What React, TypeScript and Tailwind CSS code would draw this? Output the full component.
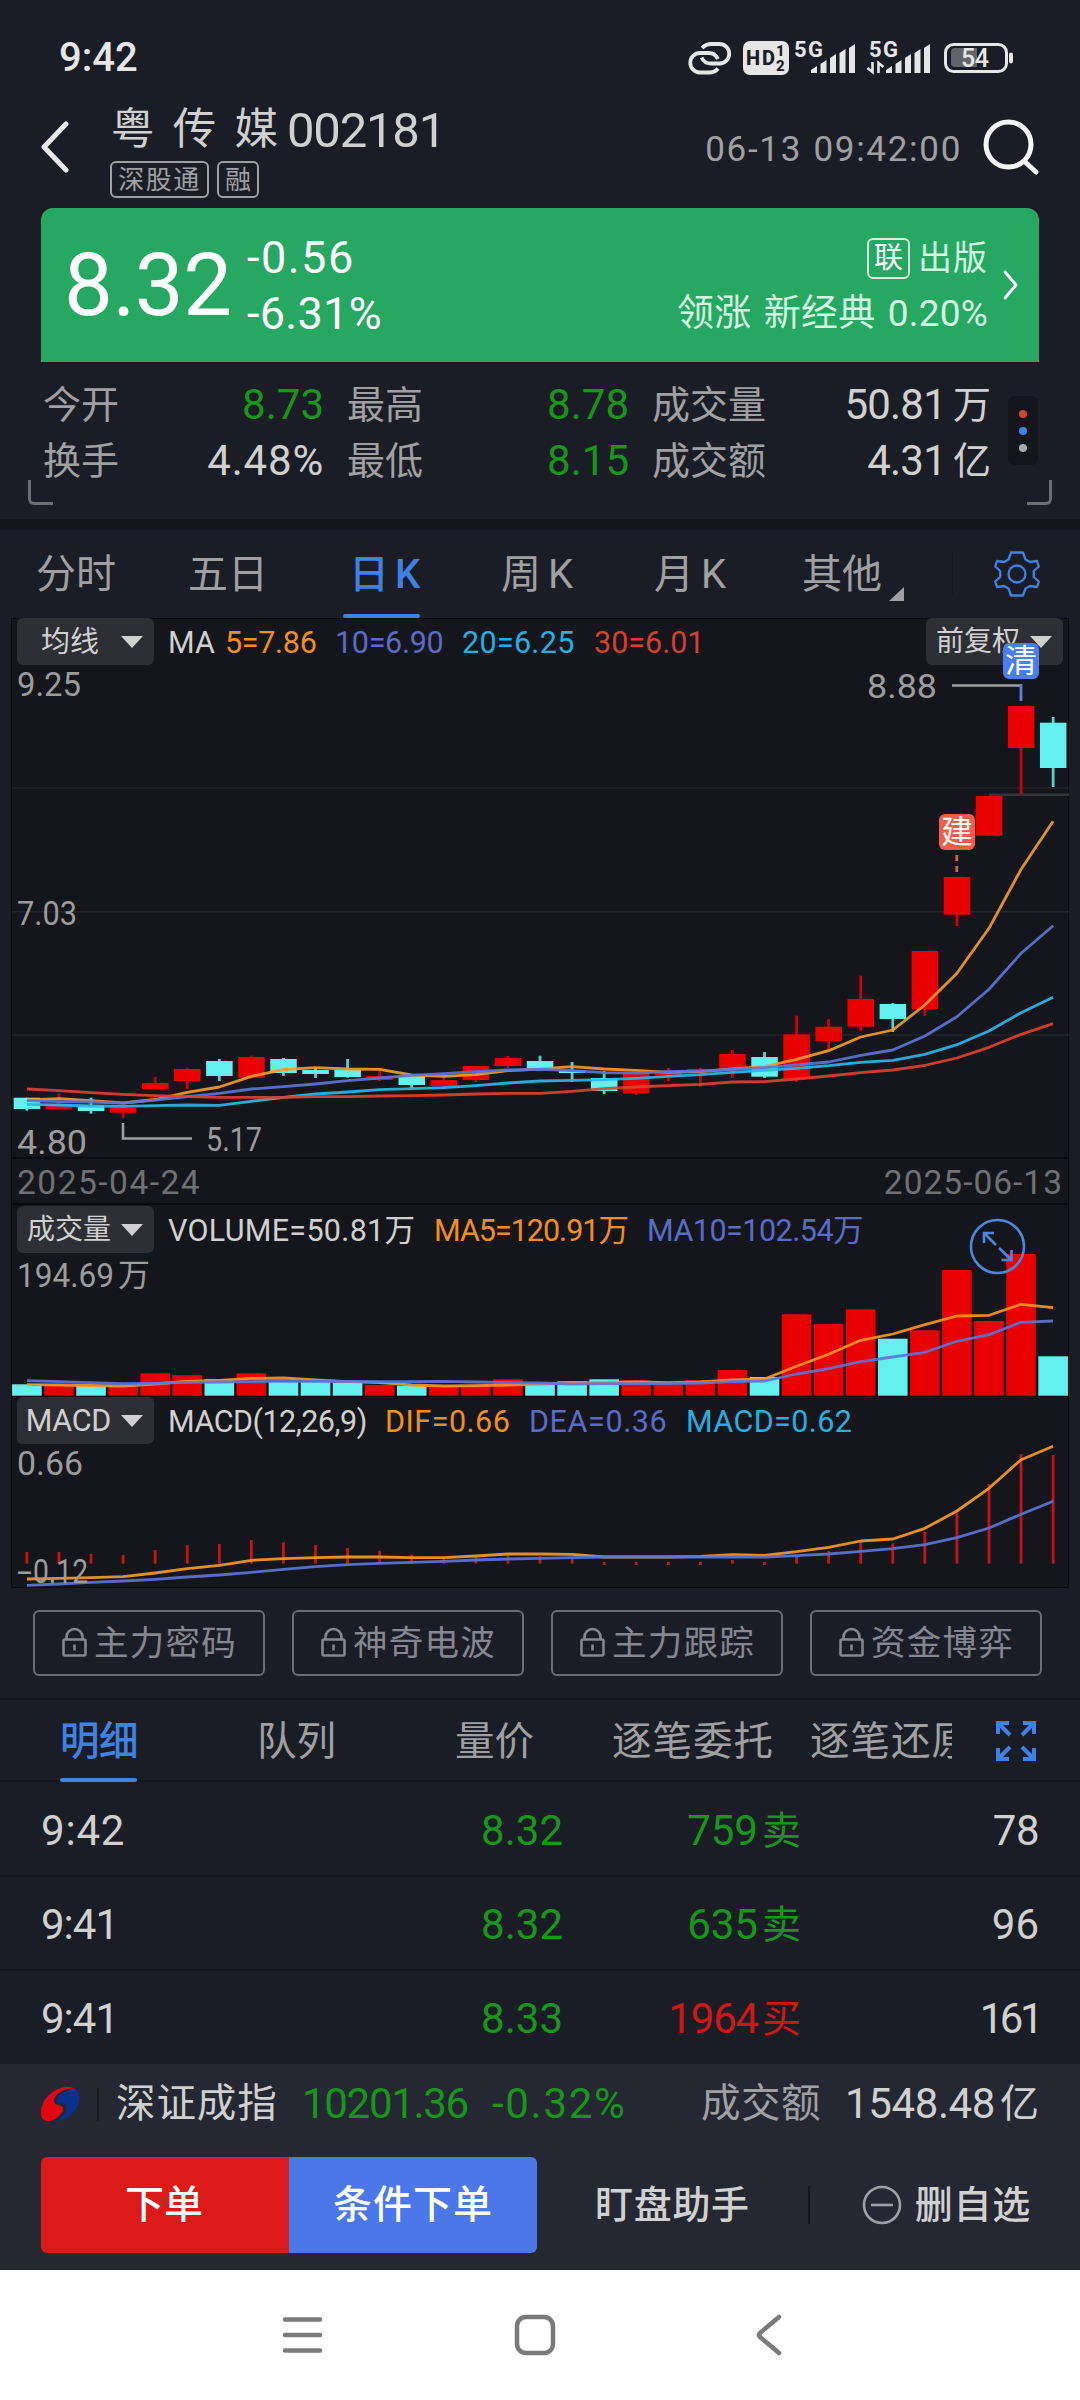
import { type ReactNode } from 'react';
import clsx from 'clsx';

const RED = '#e90000';
const CYAN = '#63f0ef';

const STEP = 32.07;
const cx = (i: number) => 26.9 + i * STEP;

// [up, high, bodyTop, bodyBottom, low]
const candles: [number, number, number, number, number][] = [
  [0, 1097.7, 1097.7, 1109, 1110.7],
  [1, 1093.3, 1104, 1109.3, 1109.3],
  [0, 1097.7, 1105, 1111, 1113.7],
  [1, 1107.7, 1107.7, 1112.7, 1117.7],
  [1, 1077, 1083, 1089, 1089],
  [1, 1067.7, 1069, 1081, 1089],
  [0, 1059, 1061, 1076, 1081],
  [1, 1055.7, 1057, 1077.7, 1078.5],
  [0, 1058, 1059, 1073, 1076],
  [0, 1068, 1070, 1074, 1078],
  [0, 1059, 1070, 1077, 1077.7],
  [1, 1070.7, 1076, 1080, 1081],
  [0, 1075.7, 1075.7, 1085, 1088],
  [1, 1076, 1080, 1086, 1089],
  [1, 1066, 1066, 1080, 1082],
  [1, 1056, 1058, 1066, 1068],
  [0, 1055.7, 1061, 1068.5, 1068.5],
  [0, 1062, 1070, 1073, 1082],
  [0, 1071, 1078, 1091, 1094],
  [1, 1072.7, 1072.7, 1093.5, 1095],
  [1, 1067.7, 1073, 1075, 1081],
  [1, 1067.7, 1069, 1071, 1086.7],
  [1, 1050, 1054, 1070, 1078],
  [0, 1052, 1057, 1076.7, 1078],
  [1, 1015.7, 1034.3, 1079, 1082],
  [1, 1019, 1026.7, 1041, 1050],
  [1, 975.7, 999, 1026.7, 1031],
  [0, 1003, 1004, 1019, 1032],
  [1, 951, 951, 1009, 1016],
  [1, 877, 877, 914.7, 926],
  [1, 796, 796, 835.7, 835.7],
  [1, 706, 706, 748, 794],
  [0, 717, 722.7, 768, 787],
];

const ma5 = [1100, 1098.7, 1100.7, 1103, 1099.5, 1092.3, 1087, 1076.3, 1069.7, 1067.7, 1069, 1069.3, 1075, 1076.3, 1074.7, 1070.7, 1069, 1066.7, 1069, 1070.3, 1072.3, 1071.7, 1069, 1066.7, 1059.3, 1050.7, 1037, 1030, 1005, 973.3, 928.3, 869.3, 821.3];
const ma10 = [1100.7, 1101.7, 1102, 1103, 1100, 1096.7, 1093.3, 1089, 1086.7, 1084, 1080.7, 1078, 1075.3, 1073.7, 1071.7, 1070, 1069.3, 1070.7, 1072.7, 1073, 1071.7, 1071, 1069.3, 1067.7, 1065, 1062, 1055.3, 1050, 1036, 1016.7, 989.3, 953.3, 925.7];
const ma20 = [1104.3, 1105, 1106, 1106.3, 1105.7, 1105, 1105.3, 1101.3, 1097.3, 1094, 1092, 1089.7, 1088.7, 1087.7, 1085.7, 1083, 1081, 1080.3, 1079.7, 1078.3, 1076.3, 1074.7, 1072.3, 1070.3, 1068.3, 1065.7, 1062.3, 1060.3, 1054.3, 1044.7, 1031, 1012.7, 997.3];
const ma30 = [1089, 1090.7, 1092.7, 1094.3, 1095.7, 1096.7, 1097.3, 1097.3, 1097.3, 1096.7, 1096.7, 1096, 1095.7, 1095, 1094, 1093.3, 1093.3, 1091.3, 1088.7, 1087, 1085.7, 1084.3, 1082, 1081.7, 1079, 1076, 1072.7, 1070, 1065.3, 1058, 1047.3, 1034.3, 1023.7];

const volTops = [1384.3, 1385, 1386, 1385, 1373.3, 1375.3, 1379.3, 1373.3, 1382, 1382, 1382.7, 1385, 1385.7, 1386, 1385, 1379.3, 1384.3, 1381.3, 1379.3, 1380.3, 1384.3, 1380.3, 1370, 1377, 1314.3, 1324, 1309.3, 1338.7, 1330.3, 1270, 1321, 1254, 1356.3];
const volMa5 = [1384.7, 1385, 1385.5, 1386, 1384, 1381.3, 1380.3, 1378.3, 1378, 1380, 1381.7, 1382.7, 1385, 1386, 1385.7, 1385, 1384.3, 1383, 1382.3, 1382, 1382.7, 1382, 1380, 1379, 1366.3, 1354.3, 1340.3, 1334, 1324.7, 1316, 1315.3, 1304.3, 1307.7];
const volMa10 = [1380.7, 1381.7, 1382.7, 1383.7, 1383.3, 1382.3, 1382, 1381.7, 1381, 1381.3, 1381.3, 1381.7, 1381.7, 1381.3, 1382, 1382.7, 1383, 1384, 1383.7, 1383.7, 1383.7, 1383, 1381.7, 1381, 1374, 1368.7, 1361.7, 1357, 1352.3, 1341.3, 1334.7, 1322.3, 1321];

const hist = [1552, 1552, 1554, 1555, 1550, 1545.3, 1544, 1540, 1542.3, 1545, 1548, 1550.7, 1554.7, 1558, 1556.7, 1555, 1556, 1558, 1562, 1562, 1562, 1562, 1560, 1562, 1556.7, 1551, 1542.3, 1543.3, 1531.7, 1512.3, 1484, 1454, 1455];
const dif = [1579, 1578.3, 1577.7, 1576.7, 1573, 1568.7, 1565.3, 1560.3, 1558.7, 1557.7, 1557, 1557, 1557.7, 1557.7, 1556, 1554, 1554, 1554.3, 1557, 1557, 1557, 1556.3, 1554.7, 1555.3, 1551.7, 1547.3, 1541, 1539, 1528.3, 1511, 1488.3, 1459.7, 1446.3];
const dea = [1585.3, 1584, 1582.3, 1581, 1579.3, 1577, 1575, 1572.3, 1569.3, 1566.7, 1564.7, 1563.3, 1562.3, 1561.3, 1560, 1559, 1558.3, 1557.7, 1557, 1557, 1557, 1557, 1557, 1557, 1555.7, 1554, 1551.3, 1548.7, 1544.7, 1537.7, 1528, 1514.3, 1501.3];

function Line({ data, color }: { data: number[]; color: string }) {
  const points = data.map((y, i) => `${cx(i).toFixed(1)},${y}`).join(' ');
  return <polyline points={points} fill="none" stroke={color} strokeWidth={2.8} strokeLinejoin="round" opacity={0.92} />;
}

function Label({ x, y, w, children, color = '#9c9c9e' }: { x: number; y: number; w: number; children: string; color?: string }) {
  return (
    <text x={x} y={y} textLength={w} lengthAdjust="spacingAndGlyphs" fontSize={34} fill={color}>
      {children}
    </text>
  );
}

function Dropdown({ children, className }: { children: ReactNode; className?: string }) {
  return (
    <div className={clsx('relative flex h-[47px] w-[137px] shrink-0 items-center justify-end gap-[10px] rounded-md bg-[#2e2f34] pr-[11px] pt-px text-[28px] leading-none text-[#d0d0d0]', className)}>
      <span className="whitespace-nowrap">{children}</span>
      <svg width="22" height="12" viewBox="0 0 22 12" className="shrink-0">
        <path d="M0 0H22L11 12Z" fill="#d0d0d0" />
      </svg>
    </div>
  );
}

function StatusBar() {
  const bars = [7, 13, 19, 24, 29];
  return (
    <div className="flex h-[115px] items-center justify-between pl-[59px] pr-[67px]">
      <span className="text-[40px] font-medium leading-none text-[#e6e6e6]">9:42</span>
      <svg width="326" height="40" viewBox="687 37 326 40" fill="#e6e6e6">
        <g fill="none" stroke="#e6e6e6" strokeWidth="3.800">
          <path d="M702 47Q706 43 711 43h8.500a9.500 9.500 0 0 1 0 19.500h-9q-6 0-9-6" />
          <path d="M718 67.500q-3 4-9 4h-9a9.500 9.500 0 0 1 0-19.500h9q6 0 9 6" />
        </g>
        <rect x="743" y="40" width="46" height="34" rx="7" />
        <g fill="#1b1d26" fontWeight="800">
          <text x="746" y="64" fontSize="20" textLength="29">HD</text>
          <text x="776" y="55" fontSize="15">1</text>
          <text x="776" y="70" fontSize="15">2</text>
        </g>
        <g fontSize="22" fontWeight="700">
          <text x="794" y="55.500" textLength="29">5G</text>
          <text x="869" y="55.500" textLength="29">5G</text>
        </g>
        {[811, 886].map((x) =>
          bars.map((h, i) => (
            <path key={`${x}-${i}`} d={`M${x + i * 9.5} 72v-${h - 4}l6 -4v${h}z`} />
          )),
        )}
        <path d="M872.500 61v10l-5-4M878.500 72V62l5 4" fill="none" stroke="#e6e6e6" strokeWidth="2.600" />
        <rect x="945.500" y="43.500" width="61" height="27" rx="8" fill="none" stroke="#e6e6e6" strokeWidth="3" />
        <path d="M955 47h22v19h-22a4 4 0 0 1-4-4V51a4 4 0 0 1 4-4z" fill="#636469" />
        <rect x="1009" y="51.500" width="4" height="11" rx="2" />
        <text x="961" y="66" fontSize="25" fontWeight="500" textLength="28">54</text>
      </svg>
    </div>
  );
}

function Header() {
  return (
    <div className="flex h-[93px] items-start pl-[40px] pr-[41px]">
      <svg width="30" height="52" viewBox="0 0 30 52" className="mt-[6px] shrink-0" fill="none" stroke="#e9e9e9" strokeWidth="5" strokeLinecap="round" strokeLinejoin="round">
        <path d="M26 3 4 26 26 49" />
      </svg>
      <div className="-mt-[14px] ml-[40px]">
        <div className="flex h-[60px] items-center whitespace-nowrap pb-[2px] leading-none text-[#d0d0d0]">
          <span className="w-[177px] pl-px text-[43.500px] [word-spacing:7.500px]">粤 传 媒</span>
          <span className="text-[49px] tracking-[-1.200px]">002181</span>
        </div>
        <div className="flex gap-2 text-[26px] leading-none text-[#a0a0a2]">
          <span className="flex h-[37px] w-[99px] items-center justify-center rounded-md border-2 border-[#a0a0a2] tracking-[1.500px]">深股通</span>
          <span className="flex h-[37px] w-[42px] items-center justify-center rounded-md border-2 border-[#a0a0a2]">融</span>
        </div>
      </div>
      <span className="ml-auto mt-[17px] text-[35px] leading-none tracking-[1.700px] text-[#a0a0a2] [word-spacing:1px]">06-13 09:42:00</span>
      <svg width="56" height="56" viewBox="0 0 56 56" className="ml-[21px] mt-[4px] shrink-0" fill="none" stroke="#f4f4f4" strokeWidth="5" strokeLinecap="round">
        <circle cx="25.500" cy="25.500" r="22.500" />
        <path d="m41 42 12 11" />
      </svg>
    </div>
  );
}

function PriceCard() {
  return (
    <div className="mx-[41px] flex h-[154px] items-center rounded-t-xl bg-[#27a862] pl-[23px] pr-[21px] text-white">
      <span className="w-[178px] text-[87px] leading-none tracking-[-0.500px]">8.32</span>
      <div className="ml-[5px] flex flex-col pt-[2px] text-[45px] leading-[56px]">
        <span className="tracking-[1.500px]">-0.56</span>
        <span className="tracking-[0.300px]">-6.31%</span>
      </div>
      <div className="ml-auto flex flex-col items-end pt-[2px] text-[34px] leading-[56px] text-[#d3f7e1]">
        <div className="flex items-center gap-2">
          <span className="flex h-[41px] w-[43px] items-center justify-center rounded-md border-2 border-[#d3f7e1] text-[29px] leading-none text-white">联</span>
          <span className="tracking-[1px]">出版</span>
        </div>
        <span className="text-[37px] tracking-[0.200px] [word-spacing:3px]">领涨 新经典 0.20%</span>
      </div>
      <svg width="15" height="30" viewBox="0 0 15 30" className="ml-[15px] shrink-0" fill="none" stroke="#ffffff" strokeWidth="2.800" strokeLinecap="round" strokeLinejoin="round">
        <path d="M2 2 13 15 2 28" />
      </svg>
    </div>
  );
}

const stats = [
  ['今开', '8.73', 'text-[#18961b]', '最高', '8.78', 'text-[#18961b]', '成交量', '50.81万'],
  ['换手', '4.48%', 'text-[#d0d0d0] tracking-[0.800px]', '最低', '8.15', 'text-[#18961b]', '成交额', '4.31亿'],
];

function Stats() {
  return (
    <div className="relative h-[157px] pt-[15px]">
      {stats.map((r) => (
        <div key={r[0]} className="flex h-[56px] items-center whitespace-nowrap pl-[43px] text-[38px] leading-none text-[#a0a0a2]">
          <span className="w-[100px]">{r[0]}</span>
          <span className={clsx('w-[181px] text-right text-[42px]', r[2])}>{r[1]}</span>
          <span className="ml-[23px] w-[100px]">{r[3]}</span>
          <span className={clsx('w-[182px] text-right text-[42px]', r[5])}>{r[4]}</span>
          <span className="ml-[23px] w-[130px]">{r[6]}</span>
          <span className="flex w-[209px] items-center justify-end text-right text-[#d0d0d0]">
            <span className="text-[42px] tracking-[-0.800px]">{r[7].slice(0, -1)}</span>
            <span className="ml-[7px]">{r[7].slice(-1)}</span>
          </span>
        </div>
      ))}
      <div className="absolute left-[1008px] top-[34px] flex h-[69px] w-[30px] flex-col items-center justify-center gap-[9px] rounded-md bg-[#15161b]">
        <i className="size-2 rounded-full bg-[#c94636]" />
        <i className="size-2 rounded-full bg-[#3f82e8]" />
        <i className="size-2 rounded-full bg-[#a8a8aa]" />
      </div>
      <div className="absolute bottom-[14px] left-[28px] h-[25px] w-[25px] rounded-bl-md border-b-[3px] border-l-[3px] border-[#6d6e73]" />
      <div className="absolute bottom-[14px] right-[28px] h-[25px] w-[25px] rounded-br-md border-b-[3px] border-r-[3px] border-[#6d6e73]" />
    </div>
  );
}

function PeriodTabs() {
  return (
    <div className="flex h-[88px] pl-[36px] text-[40px] leading-[90px] text-[#a0a0a2]">
      <span className="w-[152px]">分时</span>
      <span className="w-[155px]">五日</span>
      <div className="flex h-full w-[77px] flex-col whitespace-nowrap text-[#3f82e3]">
        <span className="h-[84px] pl-[6px] font-medium [word-spacing:-4px]">日 K</span>
        <span className="h-1 rounded-full bg-[#3f82e3]" />
      </div>
      <span className="ml-[81px] w-[153px] [word-spacing:-3px]">周 K</span>
      <span className="w-[148px] [word-spacing:-3px]">月 K</span>
      <span className="w-[84px]">其他</span>
      <svg width="15" height="14" viewBox="0 0 15 14" className="ml-[3px] mt-[57px]">
        <path d="M15 0V14H0Z" fill="#a0a0a2" />
      </svg>
      <span className="ml-[48px] mt-[23px] h-[41px] w-px bg-[#15161b]" />
      <svg width="46" height="46" viewBox="-23 -23 46 46" className="ml-[41px] mt-[21px]" fill="none" stroke="#3f82e3" strokeWidth="2.300" strokeLinejoin="round">
        <circle r="8.500" />
        <path d="M-6-21.500H6L8.500-14.500 13-12 20-13 21.800-7.500 16.800-3V3L21.800 7.500 20 13 13 12 8.500 14.500 6 21.500H-6L-8.500 14.500-13 12-20 13-21.800 7.500-16.800 3V-3L-21.800-7.500-20-13-13-12-8.500-14.500Z" />
      </svg>
    </div>
  );
}

function Legend({ items }: { items: [string, string][] }) {
  return (
    <div className="ml-[14px] mt-[3px] flex items-center whitespace-nowrap text-[30.500px] leading-none">
      {items.map(([text, cls]) => (
        <span key={text} className={cls}>{text}</span>
      ))}
    </div>
  );
}

function PriceChart() {
  return (
    <div className="relative h-[541px] border-b-2 border-[#0b0c10]">
      <svg className="absolute left-0 top-0 overflow-visible" width="1057" height="541" viewBox="12 618 1057 541">
        {[788, 911.7, 1035].map((y) => (
          <path key={y} d={`M12 ${y}H1069`} stroke="#232529" strokeWidth="1.500" />
        ))}
        <path d="M989 794.700H1069" stroke="#343538" strokeWidth="2.500" />
        {candles.map(([up, high, top, bottom, low], i) => (
          <g key={i} fill={up ? RED : CYAN}>
            <rect x={cx(i) - 1.4} y={high} width={2.8} height={low - high} opacity={0.85} />
            <rect x={cx(i) - 13.2} y={top} width={26.5} height={bottom - top} />
          </g>
        ))}
        <Line data={ma5} color="#f59a27" />
        <Line data={ma10} color="#5c74d6" />
        <Line data={ma20} color="#28b7ea" />
        <Line data={ma30} color="#dc4130" />
        <Label x={17} y={696} w={64}>9.25</Label>
        <Label x={17} y={925} w={60}>7.03</Label>
        <Label x={17} y={1154} w={70}>4.80</Label>
        <Label x={206} y={1151} w={56}>5.17</Label>
        <Label x={867} y={698} w={70}>8.88</Label>
        <path d="M123 1123V1138.500H192M952 685.500H1020" fill="none" stroke="#a0a0a2" strokeWidth="2.600" />
        <path d="M1021 684V701" stroke="#5c80e0" strokeWidth="2.800" />
        <path d="M956.800 855v6M956.800 866v6" stroke="#d8604f" strokeWidth="2.800" />
      </svg>
      <div className="flex items-center justify-between px-[5px]">
        <div className="flex items-center">
          <Dropdown><span className="mr-[12px] text-[29px]">均线</span></Dropdown>
          <Legend
            items={[
              ['MA', 'w-[57px] text-[#d0d0d0]'],
              ['5=7.86', 'w-[110px] tracking-[-0.300px] text-[#f08f21]'],
              ['10=6.90', 'w-[127px] tracking-[-0.300px] text-[#5a6bc8]'],
              ['20=6.25', 'w-[132px] tracking-[0.300px] text-[#26aee0]'],
              ['30=6.01', 'text-[#d2402f]'],
            ]}
          />
        </div>
        <Dropdown>前复权</Dropdown>
      </div>
      <span className="absolute left-[927px] top-[196px] flex size-9 items-center justify-center rounded-md bg-[#ee5f4b] text-[32px] leading-none text-white">建</span>
      <span className="absolute left-[991px] top-[25px] flex size-9 items-center justify-center rounded-md bg-[#4a7df0] text-[32px] leading-none text-white">清</span>
    </div>
  );
}

function VolumeChart() {
  return (
    <div className="relative h-[192px] border-b-2 border-[#0b0c10]">
      <svg className="absolute left-0 top-0 overflow-visible" width="1057" height="192" viewBox="12 1205 1057 192">
        {volTops.map((y, i) => (
          <rect key={i} x={cx(i) - 14.8} y={y} width={29.6} height={1395.7 - y} fill={candles[i][0] ? RED : CYAN} />
        ))}
        <Line data={volMa5} color="#f9951f" />
        <Line data={volMa10} color="#5c74d6" />
        <Label x={17} y={1287} w={97}>194.69</Label>
        <text x={118} y={1286} fontSize={32} fill="#9c9c9e">万</text>
        <g fill="none" stroke="#4a87dd" strokeWidth="2.600">
          <circle cx="997.500" cy="1246.500" r="26.500" />
          <path d="M984 1243V1233H994M984 1233 996 1245M999 1248 1011.500 1260M1001.500 1260H1011.500V1250" />
        </g>
      </svg>
      <div className="relative flex items-center pl-[5px] pt-[1px]">
        <Dropdown>成交量</Dropdown>
        <Legend
          items={[
            ['VOLUME=50.81万', 'w-[266px] tracking-[0.300px] text-[#d0d0d0]'],
            ['MA5=120.91万', 'w-[213px] tracking-[-1px] text-[#f08f21]'],
            ['MA10=102.54万', 'tracking-[-0.500px] text-[#5a6bc8]'],
          ]}
        />
      </div>
    </div>
  );
}

function MacdChart() {
  return (
    <div className="relative h-[189px]">
      <svg className="absolute left-0 top-0 overflow-visible" width="1057" height="190" viewBox="12 1397 1057 190">
        {hist.map((y, i) => (
          <rect key={i} x={cx(i) - 1.4} y={y} width={2.8} height={(y === 1562 ? 1565 : 1563.7) - y} fill="#c41416" />
        ))}
        <Line data={dif} color="#f59a27" />
        <Line data={dea} color="#5c74d6" />
        <Label x={17} y={1475} w={66}>0.66</Label>
        <text x={17} y={1583} fontSize={34} fill="#9c9c9e">
          <tspan textLength="15" lengthAdjust="spacingAndGlyphs">-</tspan>
          <tspan x="33" textLength="55" lengthAdjust="spacingAndGlyphs">0.12</tspan>
        </text>
      </svg>
      <div className="relative flex items-center pl-[5px]">
        <Dropdown><span className="text-[30.500px] tracking-[-0.300px]">MACD</span></Dropdown>
        <Legend
          items={[
            ['MACD(12,26,9)', 'w-[217px] tracking-[-0.500px] text-[#d0d0d0]'],
            ['DIF=0.66', 'w-[144px] tracking-[0.500px] text-[#f08f21]'],
            ['DEA=0.36', 'w-[157px] tracking-[0.600px] text-[#5a6bc8]'],
            ['MACD=0.62', 'tracking-[0.400px] text-[#26aee0]'],
          ]}
        />
      </div>
    </div>
  );
}

function Charts() {
  return (
    <div className="mx-[11px] h-[970px] border border-[#0b0c10] bg-[#15161b]">
      <div className="-mt-px">
        <PriceChart />
        <div className="flex h-[46px] items-center justify-between border-b-2 border-[#0b0c10] px-[5px] pt-[4px] text-[33.500px] leading-none text-[#707174]">
          <span className="tracking-[1.500px]">2025-04-24</span>
          <span className="tracking-[1px]">2025-06-13</span>
        </div>
        <VolumeChart />
        <MacdChart />
      </div>
    </div>
  );
}

function LockedIndicators() {
  return (
    <div className="flex h-[110px] gap-[27px] px-[33px] pt-[22px]">
      {['主力密码', '神奇电波', '主力跟踪', '资金博弈'].map((name) => (
        <div key={name} className="flex h-[66px] w-[232px] items-center justify-center gap-[6px] whitespace-nowrap rounded-md border-2 border-[#6b6c78] text-[34.500px] leading-none text-[#85868f]">
          <svg width="27" height="32" viewBox="0 0 27 32" className="shrink-0" fill="none" stroke="#85868f" strokeWidth="2.600">
            <rect x="2.500" y="12.500" width="22" height="16" rx="1.500" />
            <path d="M5.500 12V10a8 8 0 0 1 16 0v2M13.500 17.500v6" />
          </svg>
          <span className="tracking-[1.200px]">{name}</span>
        </div>
      ))}
    </div>
  );
}

function DetailTabs() {
  return (
    <div className="flex h-[84px] border-y-2 border-[#15161b] pl-[60px] text-[39.500px] leading-[83px] text-[#a0a0a2]">
      <div className="flex w-[77px] flex-col whitespace-nowrap text-[#3f82e3]">
        <span className="h-[78px] font-medium tracking-[-0.500px]">明细</span>
        <span className="h-1 shrink-0 rounded-full bg-[#3f82e3]" />
      </div>
      <span className="ml-[120px] w-[198px]">队列</span>
      <span className="w-[157px]">量价</span>
      <span className="w-[198px] tracking-[1px]">逐笔委托</span>
      <span className="w-[142px] overflow-hidden whitespace-nowrap tracking-[1px]">逐笔还原</span>
      <svg width="40" height="40" viewBox="0 0 40 40" className="ml-[44px] mt-[21px]" fill="none" stroke="#3f82e3" strokeWidth="4">
        <path d="M2 13V2H13M27 2H38V13M38 27V38H27M13 38H2V27M2 2 14 14M38 2 26 14M38 38 26 26M2 38 14 26" />
      </svg>
    </div>
  );
}

const trades = [
  { time: '9:42', price: '8.32', volume: '759', side: '卖', count: '78', cls: 'tracking-[-0.500px]' },
  { time: '9:41', price: '8.32', volume: '635', side: '卖', count: '96', cls: 'tracking-normal' },
  { time: '9:41', price: '8.33', volume: '1964', side: '买', count: '161', cls: '-mr-[1px] tracking-[-3.500px]' },
];

function Trades() {
  return (
    <div className="h-[283px] pt-px">
      {trades.map((t, i) => (
        <div key={i} className="flex h-[94px] items-center border-b-2 border-[#15161b] px-[41px] pt-[4px] text-[42px] leading-none text-[#d0d0d0] last:h-[92px] last:border-0">
          <span className={clsx('w-[220px]', i === 0 ? 'tracking-[0.800px]' : 'tracking-[-1px]')}>{t.time}</span>
          <span className="w-[302px] text-right text-[#18961b]">{t.price}</span>
          <span className={clsx('flex w-[238px] items-center justify-end', t.side === '卖' ? 'text-[#18961b]' : 'text-[#cf1717]')}>
            <span className={t.volume.length > 3 ? 'tracking-[-1.200px]' : undefined}>{t.volume}</span>
            <span className="ml-[4px] text-[39px]">{t.side}</span>
          </span>
          <span className={clsx('ml-auto', t.cls)}>{t.count}</span>
        </div>
      ))}
    </div>
  );
}

function BottomPanel() {
  return (
    <div className="-mt-px h-[206px] bg-[#252733] text-[#d0d0d0]">
      <div className="flex h-[78px] items-center whitespace-nowrap pl-[40px] pr-[41px] pt-[2px] leading-none">
        <svg width="40" height="38" viewBox="0 0 40 38" className="shrink-0">
          <path d="M36 4C26-1 14 4 7 12 0 20-1 32 4 35 11 39 22 31 23 24 24 19 13 22 14 15 15 8 27 2 36 4Z" fill="#e30613" />
          <path d="M36 4C42 9 40 21 33 28 29 32 24 35 18 36 23 31 28 25 26 20 24 17 16 21 17 15 18 8 28 4 36 4Z" fill="#0b2f8a" />
        </svg>
        <span className="ml-[17px] h-[33px] w-[2px] bg-[#1a1b22]" />
        <span className="ml-[17px] w-[186px] text-[39.500px] tracking-[0.900px]">深证成指</span>
        <span className="w-[190px] text-[42px] tracking-[-1.300px] text-[#18961b]">10201.36</span>
        <span className="text-[42px] tracking-[1.700px] text-[#18961b]">-0.32%</span>
        <span className="ml-auto text-[39.500px] tracking-[0.500px] text-[#a0a0a2]">成交额</span>
        <span className="ml-[24px] text-[42px] tracking-[-0.400px]">1548.48</span>
        <span className="ml-[5px] text-[39px]">亿</span>
      </div>
      <div className="flex items-center pl-[41px] pt-[15px] text-[38px] leading-none">
        <div className="flex h-[96px] w-[496px] overflow-hidden rounded-md text-[39px] font-medium text-white">
          <span className="flex w-1/2 items-center justify-center bg-[#dc1a1a] pr-[2px]">下单</span>
          <span className="flex w-1/2 items-center justify-center bg-[#4b77e8] tracking-[1px]">条件下单</span>
        </div>
        <span className="ml-[58px] font-medium tracking-[0.700px]">盯盘助手</span>
        <span className="ml-[58px] h-[38px] w-[2px] bg-[#16171d]" />
        <svg width="40" height="40" viewBox="0 0 40 40" className="ml-[52px]" fill="none" stroke="#a0a0a2" strokeWidth="2.600">
          <circle cx="20" cy="20" r="18" />
          <path d="M9 20H31" />
        </svg>
        <span className="ml-[13px] font-medium tracking-[0.700px]">删自选</span>
      </div>
    </div>
  );
}

function NavBar() {
  return (
    <div className="flex h-[130px] items-center bg-white">
      <svg width="1080" height="50" viewBox="0 2310 1080 50" fill="none" stroke="#7b7b7b" strokeWidth="4.500" strokeLinecap="round" strokeLinejoin="round">
        <path d="M285 2319.500H320M285 2335H320M285 2350.500H320" />
        <rect x="517" y="2317" width="36" height="36" rx="9" />
        <path d="M779 2317 760 2333Q758 2335 760 2337L779 2353" />
      </svg>
    </div>
  );
}

export default function App() {
  return (
    <div className="flex h-[2400px] w-[1080px] flex-col overflow-hidden bg-[#1b1d26] font-[Roboto,'Noto_Sans_CJK_SC',sans-serif]">
      <StatusBar />
      <Header />
      <PriceCard />
      <Stats />
      <div className="h-[11px] bg-[#15161b]" />
      <PeriodTabs />
      <Charts />
      <LockedIndicators />
      <DetailTabs />
      <Trades />
      <BottomPanel />
      <NavBar />
    </div>
  );
}
